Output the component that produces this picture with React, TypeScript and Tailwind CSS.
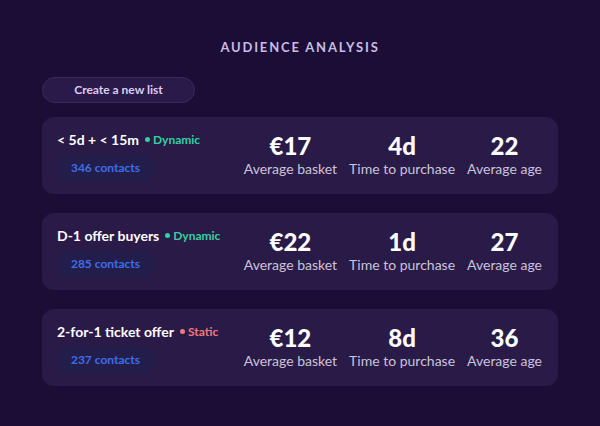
import { clsx } from "clsx";

const lists = [
  { name: "< 5d + < 15m", type: "Dynamic", contacts: 346, basket: "€17", time: "4d", age: "22" },
  { name: "D-1 offer buyers", type: "Dynamic", contacts: 285, basket: "€22", time: "1d", age: "27" },
  { name: "2-for-1 ticket offer", type: "Static", contacts: 237, basket: "€12", time: "8d", age: "36" },
];

function Metric({ value, label }: { value: string; label: string }) {
  return (
    <div className="flex flex-col items-center">
      <span className="text-[24px] leading-[28px] font-black text-white">{value}</span>
      <span className="text-[14px] leading-[18px] text-[#cbc3de]">{label}</span>
    </div>
  );
}

export default function App() {
  return (
    <div
      className="w-[600px] h-[426px] bg-[#1b0d36] px-[42px] pt-[38px]"
      style={{ fontFamily: "Lato, 'Noto Sans', sans-serif" }}
    >
      <h1 className="text-center text-[13px] font-bold tracking-[0.14em] text-[#c8bde3]">
        AUDIENCE ANALYSIS
      </h1>
      <button className="mt-[19px] h-[26px] w-[153px] rounded-full border border-[#3a2a5a] bg-[#2a1a4a] text-[12px] font-bold text-[#d8cfec]">
        Create a new list
      </button>
      <div className="mt-[14px] flex flex-col gap-[19px]">
        {lists.map((l) => (
          <div
            key={l.name}
            className="flex h-[77px] items-center justify-between rounded-[12px] bg-[#291a47] pl-[15px] pr-[16px]"
          >
            <div className="flex flex-col items-start">
              <div className="flex items-center gap-[6px]">
                <span className="text-[14px] font-bold text-white">{l.name}</span>
                <span
                  className={clsx(
                    "flex items-center gap-[3px] text-[12px] font-bold",
                    l.type === "Static" ? "text-[#f07a7a]" : "text-[#34d1a0]"
                  )}
                >
                  <span
                    className={clsx(
                      "h-[5px] w-[5px] rounded-full",
                      l.type === "Static" ? "bg-[#f07a7a]" : "bg-[#34d1a0]"
                    )}
                  />
                  {l.type}
                </span>
              </div>
              <span className="mt-[5px] flex h-[26px] w-[97px] items-center justify-center rounded-full bg-[#231d4c] text-[12px] font-bold text-[#3d6ee6]">
                {l.contacts} contacts
              </span>
            </div>
            <div className="flex gap-[12px]">
              <Metric value={l.basket} label="Average basket" />
              <Metric value={l.time} label="Time to purchase" />
              <Metric value={l.age} label="Average age" />
            </div>
          </div>
        ))}
      </div>
    </div>
  );
}
